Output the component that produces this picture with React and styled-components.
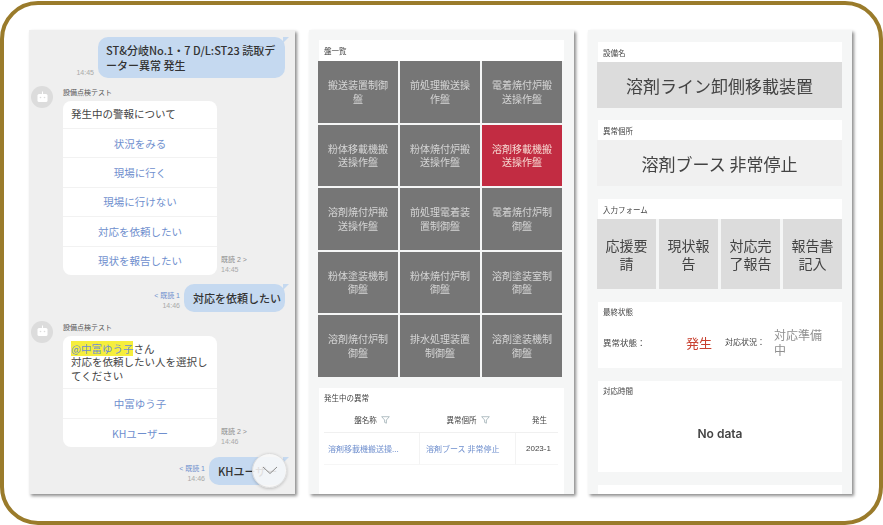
import { createGlobalStyle, styled } from "styled-components";

const GlobalStyle = createGlobalStyle`
  html, body {
    margin: 0;
    padding: 0;
    background: #fff;
  }
  body {
    font-family: "Noto Sans CJK JP", "Liberation Sans", sans-serif;
  }
`;

const Frame = styled.div`
  box-sizing: border-box;
  width: 883px;
  height: 524px;
  margin-top: 1px;
  padding: 25px 25px 0 25px;
  border: 4px solid #9a7b2b;
  border-radius: 38px;
  display: flex;
  gap: 14px;
  align-items: flex-start;
  background: #fff;
`;

const Panel = styled.div`
  position: relative;
  flex: none;
  width: ${(p) => p.$w}px;
  height: 464px;
  overflow: hidden;
  box-sizing: border-box;
  background: ${(p) => p.$bg};
  filter: blur(0.35px);
`;

const Shadowed = styled.div`
  flex: none;
  box-shadow: 2px 2px 3px rgba(0, 0, 0, 0.45);
  margin-right: ${(p) => p.$mr || 0}px;
`;

/* chat */
const Chat = styled.div`
  display: flex;
  flex-direction: column;
  padding: 7px 10px 0 2px;
`;

const Outgoing = styled.div`
  display: flex;
  justify-content: flex-end;
  align-items: flex-end;
  gap: 4px;
  margin-bottom: ${(p) => p.$mb}px;
`;

const Meta = styled.div`
  display: flex;
  flex-direction: column;
  align-items: ${(p) => (p.$left ? "flex-start" : "flex-end")};
  font-size: 7px;
  line-height: 10px;
  color: #a9a9a9;
  font-family: "Liberation Sans", "Noto Sans CJK JP", sans-serif;
  padding-bottom: ${(p) => p.$pb || 0}px;
`;

const ReadMark = styled.span`
  color: ${(p) => (p.$blue ? "#6f8fce" : "#8d8d8d")};
`;

const Bubble = styled.div`
  position: relative;
  box-sizing: border-box;
  width: ${(p) => p.$w}px;
  height: ${(p) => p.$h}px;
  padding: ${(p) => p.$pad};
  background: #c5d9f0;
  border-radius: 10px;
  font-size: 11px;
  line-height: 15px;
  color: #333;
  font-weight: 500;
  white-space: ${(p) => (p.$wrap ? "normal" : "nowrap")};

  &::after {
    content: "";
    position: absolute;
    right: -4px;
    top: 0;
    border-top: 6px solid #c5d9f0;
    border-right: 6px solid transparent;
  }
`;

const Incoming = styled.div`
  display: flex;
  gap: 10px;
  margin-bottom: ${(p) => p.$mb}px;
`;

const Avatar = styled.div`
  flex: none;
  width: 22px;
  height: 22px;
  border-radius: 50%;
  background: #dcdcdc;
  display: flex;
  align-items: center;
  justify-content: center;
`;

const Thread = styled.div`
  display: flex;
  flex-direction: column;
`;

const SenderName = styled.div`
  font-size: 7px;
  line-height: 10px;
  color: #555;
  margin-bottom: 4px;
  margin-top: 1px;
`;

const CardRow = styled.div`
  display: flex;
  align-items: flex-end;
  gap: 4px;
`;

const Card = styled.div`
  width: 154px;
  background: #fff;
  border-radius: 8px;
  overflow: hidden;
`;

const CardText = styled.div`
  box-sizing: border-box;
  min-height: 27px;
  padding: ${(p) => p.$pad || "6px 8px 5px"};
  font-size: 10.5px;
  line-height: 13.5px;
  color: #444;
`;

const Mention = styled.span`
  background: #f6ee3c;
  color: #6f8fce;
`;

const CardAction = styled.div`
  box-sizing: border-box;
  height: 29.4px;
  border-top: 1px solid #f2f2f2;
  display: flex;
  align-items: center;
  justify-content: center;
  font-size: 10.5px;
  color: #6f8fce;
`;

const ScrollDown = styled.div`
  position: absolute;
  left: 223px;
  top: 423px;
  width: 35px;
  height: 35px;
  box-sizing: border-box;
  border-radius: 50%;
  background: rgba(248, 248, 248, 0.88);
  border: 1px solid #ddd;
  box-shadow: 0 1px 3px rgba(0, 0, 0, 0.2);
  display: flex;
  align-items: center;
  justify-content: center;
`;

/* panel list */
const ListWrap = styled.div`
  padding: 10px 10px 0 10px;
`;

const SectionHead = styled.div`
  background: #fff;
  box-sizing: border-box;
  height: ${(p) => p.$h || 20}px;
  padding: 0 5px;
  display: flex;
  align-items: center;
  font-size: 7.5px;
  color: #444;
`;

const PanelGrid = styled.div`
  display: grid;
  grid-template-columns: repeat(3, 80px);
  grid-auto-rows: 61.5px;
  gap: 2px;
  margin-left: -1px;
  margin-bottom: 11px;
`;

const PanelCell = styled.div`
  background: ${(p) => (p.$alert ? "#c22c42" : "#767676")};
  color: ${(p) => (p.$alert ? "#f6d9d2" : "#d6d6d6")};
  box-sizing: border-box;
  padding: 0 6px;
  display: flex;
  align-items: center;
  justify-content: center;
  text-align: center;
  font-size: 10px;
  line-height: 13.5px;
`;

const AlertSection = styled.div`
  background: #fff;
  height: 120px;
  padding: 0 5px;
  overflow: hidden;
`;

const AlertTitle = styled.div`
  font-size: 7.5px;
  line-height: 20px;
  color: #444;
`;

const AlertTable = styled.div`
  display: grid;
  grid-template-columns: 96px 96px 47px;
  width: 234px;
  overflow: hidden;
`;

const HeadCell = styled.div`
  height: 24px;
  display: flex;
  align-items: center;
  justify-content: center;
  gap: 4px;
  font-size: 7.5px;
  color: #444;
  border-bottom: 1px solid #f0f0f0;
  white-space: nowrap;
`;

const BodyCell = styled.div`
  box-sizing: border-box;
  height: 32px;
  padding-left: ${(p) => p.$pl || 0}px;
  display: flex;
  align-items: center;
  font-size: 8px;
  color: ${(p) => p.$color || "#6f8fce"};
  border-bottom: 1px solid #f6f6f6;
  border-right: ${(p) => (p.$last ? "none" : "1px solid #f3f3f3")};
  white-space: nowrap;
  font-family: ${(p) => (p.$latin ? '"Liberation Sans", sans-serif' : "inherit")};
`;

/* detail */
const DetailWrap = styled.div`
  padding: 12px 10px 0 10px;
  display: flex;
  flex-direction: column;
`;

const Group = styled.div`
  margin-bottom: ${(p) => p.$mb ?? 12}px;
`;

const ValueBox = styled.div`
  height: 46px;
  margin-left: -1px;
  background: ${(p) => p.$bg};
  display: flex;
  align-items: center;
  justify-content: center;
  font-size: 17px;
  color: #444;
`;

const ActionRow = styled.div`
  display: grid;
  grid-template-columns: repeat(4, 59px);
  gap: 3px;
  margin-left: -1px;
`;

const ActionButton = styled.div`
  height: 70px;
  background: #dcdcdc;
  display: flex;
  align-items: center;
  justify-content: center;
  text-align: center;
  font-size: 14px;
  line-height: 18px;
  color: #444;
  padding: 0 8px;
  box-sizing: border-box;
`;

const Card2 = styled.div`
  background: #fff;
  height: ${(p) => p.$h}px;
  padding: 0 5px;
  box-sizing: border-box;
  margin-bottom: ${(p) => p.$mb ?? 13}px;
`;

const SmallLabel = styled.div`
  font-size: 7.5px;
  line-height: 20px;
  color: #444;
`;

const StatusRow = styled.div`
  display: grid;
  grid-template-columns: 83px 39px 49px 56px;
  align-items: center;
  height: 40px;
`;

const StatusLabel = styled.div`
  font-size: ${(p) => p.$s || 8.5}px;
  line-height: 10px;
  color: #444;
`;

const StatusValue = styled.div`
  font-size: ${(p) => p.$s}px;
  line-height: 15px;
  color: ${(p) => p.$color};
`;

const NoData = styled.div`
  display: flex;
  justify-content: center;
  padding-top: 25px;
  font-family: Inter, "Liberation Sans", sans-serif;
  font-size: 12px;
  font-weight: 600;
  color: #444;
`;

const RobotIcon = () => (
  <svg width="13" height="13" viewBox="0 0 13 13" fill="#fff">
    <rect x="6" y="0.5" width="1" height="2.5" />
    <rect x="1.5" y="3" width="10" height="8" rx="1.5" />
    <circle cx="4.5" cy="6.5" r="0.8" fill="#dcdcdc" />
    <circle cx="8.5" cy="6.5" r="0.8" fill="#dcdcdc" />
  </svg>
);

const FunnelIcon = () => (
  <svg width="9" height="8" viewBox="0 0 9 8" fill="none" stroke="#9fb0b5" strokeWidth="0.8">
    <path d="M0.7 0.7h7.6L5.4 4v3.2L3.6 6.4V4z" />
  </svg>
);

const panels = [
  "搬送装置制御盤",
  "前処理搬送操作盤",
  "電着焼付炉搬送操作盤",
  "粉体移載機搬送操作盤",
  "粉体焼付炉搬送操作盤",
  "溶剤移載機搬送操作盤",
  "溶剤焼付炉搬送操作盤",
  "前処理電着装置制御盤",
  "電着焼付炉制御盤",
  "粉体塗装機制御盤",
  "粉体焼付炉制御盤",
  "溶剤塗装室制御盤",
  "溶剤焼付炉制御盤",
  "排水処理装置制御盤",
  "溶剤塗装機制御盤",
];

const actions = ["状況をみる", "現場に行く", "現場に行けない", "対応を依頼したい", "現状を報告したい"];

export default function App() {
  return (
    <>
      <GlobalStyle />
      <Frame>
        <Shadowed>
          <Panel $w={266} $bg="#efefef">
            <Chat>
              <Outgoing $mb={8}>
                <Meta>14:45</Meta>
                <Bubble $w={187} $h={41} $pad="6px 8px" $wrap>
                  ST&amp;分岐No.1・7 D/L:ST23 読取データー異常 発生
                </Bubble>
              </Outgoing>
              <Incoming $mb={9}>
                <Avatar>
                  <RobotIcon />
                </Avatar>
                <Thread>
                  <SenderName>設備点検テスト</SenderName>
                  <CardRow>
                    <Card>
                      <CardText>発生中の警報について</CardText>
                      {actions.map((label) => (
                        <CardAction key={label}>{label}</CardAction>
                      ))}
                    </Card>
                    <Meta $left>
                      <ReadMark>既読 2 &gt;</ReadMark>
                      <span>14:45</span>
                    </Meta>
                  </CardRow>
                </Thread>
              </Incoming>
              <Outgoing $mb={9}>
                <Meta $pb={1}>
                  <ReadMark $blue>&lt; 既読 1</ReadMark>
                  <span>14:46</span>
                </Meta>
                <Bubble $w={101} $h={28} $pad="7px 9px">
                  対応を依頼したい
                </Bubble>
              </Outgoing>
              <Incoming $mb={10}>
                <Avatar>
                  <RobotIcon />
                </Avatar>
                <Thread>
                  <SenderName>設備点検テスト</SenderName>
                  <CardRow>
                    <Card>
                      <CardText $pad="6px 8px 6px">
                        <Mention>@中富ゆう子</Mention>さん
                        <br />
                        対応を依頼したい人を選択してください
                      </CardText>
                      <CardAction>中富ゆう子</CardAction>
                      <CardAction>KHユーザー</CardAction>
                    </Card>
                    <Meta $left>
                      <ReadMark>既読 2 &gt;</ReadMark>
                      <span>14:46</span>
                    </Meta>
                  </CardRow>
                </Thread>
              </Incoming>
              <Outgoing $mb={9}>
                <Meta $pb={1}>
                  <ReadMark $blue>&lt; 既読 1</ReadMark>
                  <span>14:46</span>
                </Meta>
                <Bubble $w={76} $h={28} $pad="7px 9px">
                  KHユーザー
                </Bubble>
              </Outgoing>
              <Incoming $mb={0}>
                <Avatar>
                  <RobotIcon />
                </Avatar>
                <Thread>
                  <SenderName>設備点検テスト</SenderName>
                </Thread>
              </Incoming>
            </Chat>
            <ScrollDown>
              <svg width="16" height="9" viewBox="0 0 16 9" fill="none" stroke="#8a8a8a" strokeWidth="1">
                <path d="M1 1l7 6.5L15 1" />
              </svg>
            </ScrollDown>
          </Panel>
        </Shadowed>
        <Shadowed>
          <Panel $w={265} $bg="#f5f6f6">
            <ListWrap>
              <SectionHead $h={21}>盤一覧</SectionHead>
              <PanelGrid>
                {panels.map((name) => (
                  <PanelCell key={name} $alert={name === "溶剤移載機搬送操作盤"}>
                    {name}
                  </PanelCell>
                ))}
              </PanelGrid>
              <AlertSection>
                <AlertTitle>発生中の異常</AlertTitle>
                <AlertTable>
                  <HeadCell>
                    盤名称 <FunnelIcon />
                  </HeadCell>
                  <HeadCell>
                    異常個所 <FunnelIcon />
                  </HeadCell>
                  <HeadCell>発生</HeadCell>
                  <BodyCell $pl={4}>溶剤移載機搬送操...</BodyCell>
                  <BodyCell $pl={6}>溶剤ブース 非常停止</BodyCell>
                  <BodyCell $pl={10} $last $latin $color="#444">
                    2023-1
                  </BodyCell>
                </AlertTable>
              </AlertSection>
            </ListWrap>
          </Panel>
        </Shadowed>
        <Shadowed>
          <Panel $w={264} $bg="#f5f6f6">
            <DetailWrap>
              <Group>
                <SectionHead>設備名</SectionHead>
                <ValueBox $bg="#dcdcdc">溶剤ライン卸側移載装置</ValueBox>
              </Group>
              <Group $mb={13}>
                <SectionHead>異常個所</SectionHead>
                <ValueBox $bg="#f0f0f0">溶剤ブース 非常停止</ValueBox>
              </Group>
              <Group $mb={13}>
                <SectionHead>入力フォーム</SectionHead>
                <ActionRow>
                  <ActionButton>応援要請</ActionButton>
                  <ActionButton>現状報告</ActionButton>
                  <ActionButton>対応完了報告</ActionButton>
                  <ActionButton>報告書記入</ActionButton>
                </ActionRow>
              </Group>
              <Card2 $h={66}>
                <SmallLabel>最終状態</SmallLabel>
                <StatusRow>
                  <StatusLabel>異常状態：</StatusLabel>
                  <StatusValue $s={13} $color="#c8402f">
                    発生
                  </StatusValue>
                  <StatusLabel $s={8}>対応状況：</StatusLabel>
                  <StatusValue $s={12} $color="#8f8f8f">
                    対応準備中
                  </StatusValue>
                </StatusRow>
              </Card2>
              <Card2 $h={91}>
                <SmallLabel>対応時間</SmallLabel>
                <NoData>No data</NoData>
              </Card2>
              <Card2 $h={20} $mb={0} />
            </DetailWrap>
          </Panel>
        </Shadowed>
      </Frame>
    </>
  );
}
